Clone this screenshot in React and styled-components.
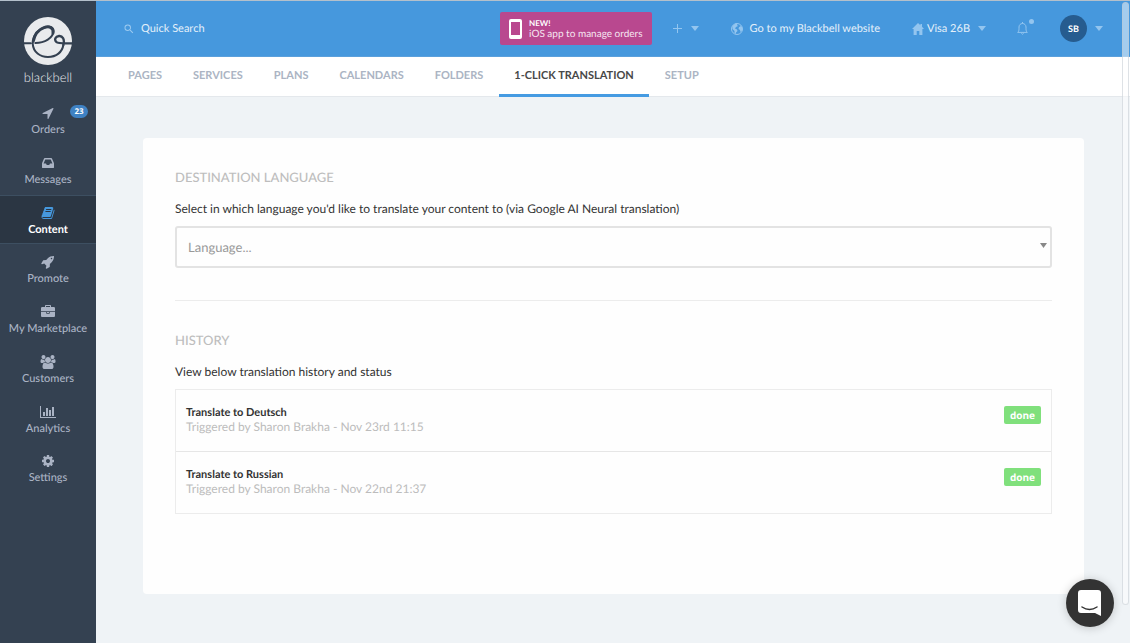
import React from "react";
import styled, { createGlobalStyle } from "styled-components";
import { MdSearch } from "react-icons/md";

const GlobalStyle = createGlobalStyle`
  *, *::before, *::after { box-sizing: border-box; }
  body {
    margin: 0;
    background: #eff3f6;
    color: #333333;
    font-family: Lato, "Liberation Sans", sans-serif;
    font-size: 12px;
    line-height: 16px;
    text-rendering: geometricPrecision;
  }
  a { color: inherit; text-decoration: none; }
  button, input, select { font: inherit; color: inherit; text-rendering: inherit; }
  button { border: 0; padding: 0; background: none; cursor: pointer; }
`;

const Page = styled.div`
  display: flex;
  min-height: 100vh;
  border-top: 1px solid #b4c0cb;
`;

const Sidebar = styled.aside`
  flex: none;
  width: 96px;
  background: #344151;
  color: #aab3c4;
`;

const Brand = styled.a`
  display: flex;
  flex-direction: column;
  align-items: center;
  height: 94px;
  padding-top: 16px;
  color: #e9ebed;
  font-size: 13px;
  font-weight: 300;
  line-height: 24px;
`;

const SideNav = styled.nav`
  display: flex;
  flex-direction: column;
  height: 398px;
`;

const SideLink = styled.a`
  position: relative;
  flex: 1;
  display: flex;
  flex-direction: column;
  align-items: center;
  gap: 2px;
  padding-top: 10px;
  border-top: 1px solid ${(p) => (p.$active ? "#3d4f61" : "transparent")};
  border-bottom: 1px solid ${(p) => (p.$active ? "#3d4f61" : "transparent")};
  background: ${(p) => (p.$active ? "#2b3643" : "transparent")};
  color: ${(p) => (p.$active ? "#ffffff" : "inherit")};
  font-size: 11px;
  line-height: 16px;
  font-weight: ${(p) => (p.$active ? 700 : 500)};

  svg {
    height: 14px;
    fill: ${(p) => (p.$active ? "#4698dd" : "currentColor")};
  }
`;

const Count = styled.span`
  position: absolute;
  top: 9px;
  right: 8px;
  width: 18px;
  height: 13px;
  border-radius: 7px;
  background: #3f82c4;
  color: #ffffff;
  font: 700 8px/13px "Open Sans", sans-serif;
  text-align: center;
`;

const Main = styled.div`
  flex: 1;
  min-width: 0;
`;

const Header = styled.header`
  display: flex;
  align-items: center;
  height: 56px;
  padding: 0 27px;
  background: #4698dd;
  border-bottom: 1px solid #5ba0dc;
  color: #e4f0fa;
`;

const Search = styled.label`
  flex: 1;
  display: flex;
  align-items: center;
  gap: 6px;
  color: #9ccaf0;

  input {
    width: 160px;
    padding: 0;
    border: 0;
    outline: 0;
    background: none;
    font-size: 11px;
  }
  input::placeholder { color: #e4f0fa; opacity: 1; }
`;

const Promo = styled.a`
  display: flex;
  align-items: center;
  gap: 7px;
  height: 33px;
  padding: 0 9px;
  border-radius: 2px;
  background: #b9488f;
  color: #f6e6f1;
  font-size: 10px;
  line-height: 11px;

  strong { display: block; color: #ffffff; font-size: 8px; }
`;

const HeaderGroup = styled.div`
  display: flex;
  align-items: center;
  gap: ${(p) => p.$gap}px;
  margin-left: ${(p) => p.$before}px;
  font-size: 11px;
  white-space: nowrap;

  svg { color: #93c5ef; }
`;

const IconButton = styled.button`
  display: flex;
  align-items: center;
  gap: ${(p) => p.$gap || 0}px;
`;

const BellButton = styled(IconButton)`
  position: relative;

  &::after {
    content: "";
    position: absolute;
    top: -3px;
    right: -6px;
    width: 5px;
    height: 5px;
    border-radius: 50%;
    background: #93c5ef;
  }
`;

const Avatar = styled.span`
  width: 27px;
  height: 27px;
  border-radius: 50%;
  background: #265c8f;
  color: #ffffff;
  font-size: 9px;
  font-weight: 700;
  line-height: 27px;
  text-align: center;
`;

const Tabs = styled.nav`
  display: flex;
  gap: 1px;
  height: 40px;
  padding: 0 17px;
  background: #ffffff;
  border-bottom: 1px solid #e4e8ec;
`;

const Tab = styled.a`
  height: 40px;
  padding: 0 15px;
  border-bottom: 3px solid ${(p) => (p.$active ? "#459be2" : "transparent")};
  color: ${(p) => (p.$active ? "#484848" : "#abb4c3")};
  font-size: 11px;
  font-weight: 700;
  line-height: 37px;
  white-space: nowrap;
`;

const Content = styled.main`
  padding: 41px 46px 48px 47px;
`;

const Card = styled.div`
  padding: 31px 32px 80px;
  border-radius: 4px;
  background: #fefefe;
`;

const Section = styled.section`
  & + & {
    margin-top: 32px;
    padding-top: 31px;
    border-top: 1px solid #ececec;
  }
`;

const Title = styled.h2`
  margin: 0 0 16px;
  color: #bdbdbd;
  font-size: 13px;
  font-weight: 500;
  line-height: 16px;
`;

const Lead = styled.p`
  margin: 0 0 9px;
  line-height: 16px;
`;

const SelectBox = styled.div`
  position: relative;

  select {
    display: block;
    width: 100%;
    height: 42px;
    padding: 0 11px;
    appearance: none;
    border: 2px solid #e3e3e3;
    border-radius: 3px;
    outline: 0;
    background: transparent;
    color: #999999;
    font-size: 13px;
  }
  svg {
    position: absolute;
    top: 17px;
    right: 5px;
    pointer-events: none;
    fill: #888888;
  }
`;

const History = styled.ul`
  margin: 0;
  padding: 0;
  list-style: none;
  border: 1px solid #ececec;
`;

const Entry = styled.li`
  display: flex;
  justify-content: space-between;
  align-items: flex-start;
  height: 61px;
  padding: 16px 10px 0;
  line-height: 14px;

  & + & { height: 62px; border-top: 1px solid #e6e6e6; }
`;

const EntryName = styled.div`
  color: #333333;
  font-size: 11px;
  font-weight: 700;
`;

const EntryMeta = styled.div`
  color: #bcbcbc;
`;

const Status = styled.span`
  height: 18px;
  padding: 0 6px;
  border-radius: 2px;
  background: #80e07c;
  color: #ffffff;
  font: 700 10px/18px "Open Sans", sans-serif;
`;

const ScrollTrack = styled.div`
  position: fixed;
  top: 2px;
  right: 1px;
  bottom: 38px;
  width: 7px;
  border: 1px solid rgba(190, 198, 206, 0.5);
  border-radius: 4px;
  background: rgba(255, 255, 255, 0.5);
`;

const ChatButton = styled.button`
  position: fixed;
  right: 16px;
  bottom: 16px;
  display: flex;
  align-items: center;
  justify-content: center;
  width: 48px;
  height: 48px;
  border-radius: 50%;
  background: #333333;
  box-shadow: 0 1px 10px rgba(0, 0, 0, 0.2);
`;

const Logo = () => (
  <svg width="48" height="48" viewBox="0 0 144 144" aria-hidden="true">
    <circle cx="72" cy="72" r="72" fill="#e9ebed" />
    <g fill="none" stroke="#344151" strokeLinecap="round">
      <path strokeWidth="6" d="M0 79H20M34 78C62 78 88 63 88 43C88 29 74 26 60 32C40 39 26 58 26 80C28 106 48 120 72 120C97 120 115 105 118 84" />
      <path strokeWidth="9" d="M28 72C32 53 44 38 60 32C76 26 90 32 87 48" />
      <path strokeWidth="7" d="M118 84C123 66 115 56 105 57C94 58 90 68 97 75C102 80 112 79 144 79" />
    </g>
  </svg>
);

const Caret = () => (
  <svg width="8" height="5" viewBox="0 0 8 5" aria-hidden="true">
    <path fill="currentColor" d="M0 0H8L4 5Z" />
  </svg>
);

const GlobeIcon = () => (
  <svg width="12" height="12" viewBox="0 0 24 24" aria-hidden="true">
    <circle cx="12" cy="12" r="11" fill="none" stroke="currentColor" strokeWidth="2" />
    <path fill="currentColor" d="M3 6L9 1H13L12 4L14 6L10 8L8 11L12 13L13 16L10 19V22L7 20V16L3 12Z" />
    <path fill="currentColor" d="M17 4L22 8L23 14L19 18L18 14L15 12L16 8L19 7Z" />
  </svg>
);

const HomeIcon = () => (
  <svg width="12" height="12" viewBox="0 0 12 12" aria-hidden="true">
    <path fill="currentColor" d="M6 0L8.4 2.3V1H10V3.8L12 6H10.4V12H7.3V8H4.7V12H1.6V6H0Z" />
  </svg>
);

const BellIcon = () => (
  <svg width="11" height="13" viewBox="0 0 11 13" fill="none" stroke="currentColor" aria-hidden="true">
    <path d="M.7 10.4H10.3C9.3 9.5 9 8.4 9 6.8V5C9 3.1 7.6 1.5 5.5 1.5S2 3.1 2 5V6.8C2 8.4 1.7 9.5 .7 10.4ZM5.5 0V1.5" />
    <path d="M4.4 11.4Q5.5 13 6.6 11.4" />
  </svg>
);

const NAV = [
  { label: "Orders", count: 23, w: 1792, d: "M1593 349l-640 1280q-17 35-57 35-5 0-15-2-22-5-35.500-22.500t-13.500-39.500v-576h-576q-22 0-39.500-13.500t-22.500-35.500 4-42 29-30l1280-640q13-7 29-7 27 0 45 19 15 14 18.500 34.500t-6.500 39.500z" },
  { label: "Messages", w: 1792, d: "M1151 960h316q-1-3-2.500-8.500t-2.500-7.500l-212-496h-708l-212 496q-1 3-2.500 8.500t-2.500 7.500h316l95 192h320zm513 30v482q0 26-19 45t-45 19h-1408q-26 0-45-19t-19-45v-482q0-62 25-123l238-552q10-25 36.500-42t52.500-17h832q26 0 52.500 17t36.500 42l238 552q25 61 25 123z" },
  { label: "Content", active: true, w: 1792, d: "M1703 478q40 57 18 129l-275 906q-19 64-76.500 107.500t-122.500 43.500h-923q-77 0-148.500-53.500t-99.500-131.500q-24-67-2-127 0-4 3-27t4-37q1-8-3-21.500t-3-19.500q2-11 8-21t16.500-23.500 16.500-23.500q23-38 45-91.500t30-91.500q3-10 .5-30t-.5-28q3-11 17-28t17-23q21-36 42-92t25-90q1-9-2.500-32t.5-28q4-13 22-30.500t22-22.500q19-26 42.500-84.500t27.500-96.500q1-8-3-25.500t-2-26.500q2-8 9-18t18-23 17-21q8-12 16.500-30.500t15-35 16-36 19.500-32 26.500-23.500 36-11.500 47.500 5.500l-1 3q38-9 51-9h761q74 0 114 56t18 130l-274 906q-36 119-71.500 153.500t-128.500 34.500h-869q-27 0-38 15-11 16-1 43 24 70 144 70h923q29 0 56-15.500t35-41.500l300-987q7-22 5-57 38 15 59 43zm-1064 2q-4 13 2 22.500t20 9.500h608q13 0 25.500-9.500t16.500-22.500l21-64q4-13-2-22.500t-20-9.500h-608q-13 0-25.500 9.500t-16.500 22.500zm-83 256q-4 13 2 22.500t20 9.500h608q13 0 25.500-9.500t16.500-22.500l21-64q4-13-2-22.500t-20-9.500h-608q-13 0-25.500 9.500t-16.500 22.500z" },
  { label: "Promote", w: 1792, d: "M1440 448q0-40-28-68t-68-28-68 28-28 68 28 68 68 28 68-28 28-68zm224-288q0 249-75.500 430.500t-253.500 360.500q-81 80-195 176l-20 379q-2 16-16 26l-384 224q-7 4-16 4-12 0-23-9l-64-64q-13-14-8-32l85-276-281-281-276 85q-3 1-9 1-14 0-23-9l-64-64q-17-19-5-39l224-384q10-14 26-16l379-20q96-114 176-195 188-187 358-258t431-71q14 0 24 9.500t10 22.500z" },
  { label: "My Marketplace", w: 1792, d: "M640 256h512v-128h-512v128zm1152 640v480q0 66-47 113t-113 47h-1472q-66 0-113-47t-47-113v-480h672v160q0 26 19 45t45 19h320q26 0 45-19t19-45v-160h672zm-768 0v128h-256v-128h256zm768-480v384h-1792v-384q0-66 47-113t113-47h352v-160q0-40 28-68t68-28h576q40 0 68 28t28 68v160h352q66 0 113 47t47 113z" },
  { label: "Customers", w: 2048, d: "M657 896q-162 5-265 128h-134q-82 0-138-40.500t-56-118.500q0-353 124-353 6 0 43.500 21t97.500 42.500 119 21.500q67 0 133-23-5 37-5 66 0 159 93 256zm1071 637q0 120-73 189.500t-194 69.500h-874q-121 0-194-69.500t-73-189.500q0-53 3.500-103.500t14-109 26.500-108.500 43-97.500 62-81 85.500-53.500 111.500-20q10 0 43 21.500t73 48 107 48 135 21.500 135-21.500 107-48 73-48 43-21.500q61 0 111.500 20t85.500 53.500 62 81 43 97.500 26.500 108.500 14 109 3.500 103.500zm-1024-1277q0 106-75 181t-181 75-181-75-75-181 75-181 181-75 181 75 75 181zm704 384q0 159-112.500 271.500t-271.500 112.500-271.500-112.500-112.500-271.500 112.500-271.500 271.500-112.500 271.500 112.500 112.500 271.500zm576 225q0 78-56 118.500t-138 40.500h-134q-103-123-265-128 93-97 93-256 0-29-5-66 66 23 133 23 59 0 119-21.500t97.500-42.500 43.500-21q124 0 124 353zm-128-609q0 106-75 181t-181 75-181-75-75-181 75-181 181-75 181 75 75 181z" },
  { label: "Analytics", w: 2048, d: "M640 896v512h-256v-512h256zm384-512v1024h-256v-1024h256zm1024 1152v128h-2048v-1536h128v1408h1920zm-640-896v768h-256v-768h256zm384-384v1152h-256v-1152h256z" },
  { label: "Settings", w: 1792, d: "M1152 896q0-106-75-181t-181-75-181 75-75 181 75 181 181 75 181-75 75-181zm512-109v222q0 12-8 23t-20 13l-185 28q-19 54-39 91 35 50 107 138 10 12 10 25t-9 23q-27 37-99 108t-94 71q-12 0-26-9l-138-108q-44 23-91 38-16 136-29 186-7 28-36 28h-222q-14 0-24.500-8.500t-11.500-21.500l-28-184q-49-16-90-37l-141 107q-10 9-25 9-14 0-25-11-126-114-165-168-7-10-7-23 0-12 8-23 15-21 51-66.500t54-70.500q-27-50-41-99l-183-27q-13-2-21-12.500t-8-23.500v-222q0-12 8-23t19-13l186-28q14-46 39-92-40-57-107-138-10-12-10-24 0-10 9-23 26-36 98.500-107.500t94.500-71.500q13 0 26 10l138 107q44-23 91-38 16-136 29-186 7-28 36-28h222q14 0 24.500 8.500t11.500 21.500l28 184q49 16 90 37l142-107q9-9 24-9 13 0 25 10 129 119 165 170 7 8 7 22 0 12-8 23-15 21-51 66.500t-54 70.500q26 50 41 98l183 28q13 2 21 12.500t8 23.500z" },
];

const TABS = ["PAGES", "SERVICES", "PLANS", "CALENDARS", "FOLDERS", "1-CLICK TRANSLATION", "SETUP"];

const HISTORY = [
  { name: "Translate to Deutsch", meta: "Triggered by Sharon Brakha - Nov 23rd 11:15" },
  { name: "Translate to Russian", meta: "Triggered by Sharon Brakha - Nov 22nd 21:37" },
];

export default function App() {
  return (
    <>
      <GlobalStyle />
      <Page>
        <Sidebar>
          <Brand href="#">
            <Logo />
            <span>blackbell</span>
          </Brand>
          <SideNav>
            {NAV.map((item) => (
              <SideLink key={item.label} href="#" $active={item.active}>
                <svg viewBox={`0 0 ${item.w} 1792`} aria-hidden="true">
                  <path d={item.d} />
                </svg>
                {item.label}
                {item.count && <Count>{item.count}</Count>}
              </SideLink>
            ))}
          </SideNav>
        </Sidebar>
        <Main>
          <Header>
            <Search>
              <MdSearch size={12} />
              <input type="search" placeholder="Quick Search" aria-label="Quick Search" />
            </Search>
            <Promo href="#">
              <svg width="13" height="20" viewBox="0 0 13 20" aria-hidden="true">
                <path fill="#fff" fillRule="evenodd" d="M2 0H11Q13 0 13 2V18Q13 20 11 20H2Q0 20 0 18V2Q0 0 2 0ZM2 3V16H11V3Z" />
              </svg>
              <span>
                <strong>NEW!</strong>
                iOS app to manage orders
              </span>
            </Promo>
            <HeaderGroup $before={21}>
              <IconButton $gap={9} aria-label="Add">
                <svg width="9" height="9" viewBox="0 0 9 9" aria-hidden="true">
                  <path stroke="currentColor" d="M4.500 0V9M0 4.500H9" />
                </svg>
                <Caret />
              </IconButton>
            </HeaderGroup>
            <HeaderGroup as="a" href="#" $before={32} $gap={7}>
              <GlobeIcon />
              Go to my Blackbell website
            </HeaderGroup>
            <HeaderGroup $before={32}>
              <IconButton $gap={3}>
                <HomeIcon />
                Visa 26B
              </IconButton>
            </HeaderGroup>
            <HeaderGroup $before={8}>
              <IconButton aria-label="Choose site">
                <Caret />
              </IconButton>
            </HeaderGroup>
            <HeaderGroup $before={31}>
              <BellButton aria-label="Notifications">
                <BellIcon />
              </BellButton>
            </HeaderGroup>
            <HeaderGroup $before={32}>
              <IconButton $gap={8} aria-label="Account">
                <Avatar>SB</Avatar>
                <Caret />
              </IconButton>
            </HeaderGroup>
          </Header>
          <Tabs>
            {TABS.map((tab) => (
              <Tab key={tab} href="#" $active={tab === "1-CLICK TRANSLATION"}>
                {tab}
              </Tab>
            ))}
          </Tabs>
          <Content>
            <Card>
              <Section>
                <Title>DESTINATION LANGUAGE</Title>
                <Lead>
                  <label htmlFor="language">
                    Select in which language you'd like to translate your content to (via Google AI Neural translation)
                  </label>
                </Lead>
                <SelectBox>
                  <select id="language">
                    <option>Language...</option>
                  </select>
                  <svg width="7" height="5" viewBox="0 0 7 5" aria-hidden="true">
                    <path d="M0 0H7L3.500 5Z" />
                  </svg>
                </SelectBox>
              </Section>
              <Section>
                <Title>HISTORY</Title>
                <Lead>View below translation history and status</Lead>
                <History>
                  {HISTORY.map((entry) => (
                    <Entry key={entry.name}>
                      <div>
                        <EntryName>{entry.name}</EntryName>
                        <EntryMeta>{entry.meta}</EntryMeta>
                      </div>
                      <Status>done</Status>
                    </Entry>
                  ))}
                </History>
              </Section>
            </Card>
          </Content>
        </Main>
        <ScrollTrack />
        <ChatButton aria-label="Open chat">
          <svg width="24" height="27" viewBox="0 0 24 27" aria-hidden="true">
            <path fill="#fff" d="M3 0H20Q23 0 23 3V26L17 23H3Q0 23 0 20V3Q0 0 3 0Z" />
            <path fill="none" stroke="#333" strokeWidth="1.500" strokeLinecap="round" d="M4 17Q11.500 22 19 17" />
          </svg>
        </ChatButton>
      </Page>
    </>
  );
}
